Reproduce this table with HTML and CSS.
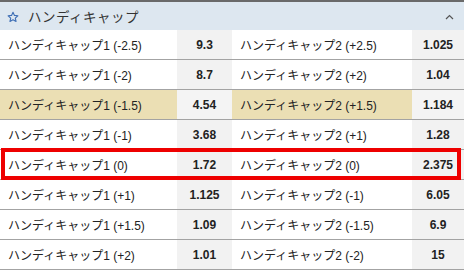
FILE: index.html
```html
<!DOCTYPE html>
<html lang="ja">
<head>
<meta charset="utf-8">
<link rel="stylesheet" href="styles.css">
</head>
<body>
<div class="market">
  <div class="head">
    <svg class="star" width="12" height="12" viewBox="0 0 24 24"><path d="M12 2.5l2.9 6.3 6.9.7-5.2 4.6 1.5 6.8L12 17.4l-6.1 3.5 1.5-6.8-5.2-4.6 6.9-.7z" fill="none" stroke="#3f6fb5" stroke-width="2.2" stroke-linejoin="round"/></svg>
    <span class="title">ハンディキャップ</span>
    <svg class="chev" width="9" height="6" viewBox="0 0 9 6"><polyline points="1,5 4.5,1.5 8,5" fill="none" stroke="#555" stroke-width="1.2"/></svg>
  </div>
  <div class="row"><div class="lbl">ハンディキャップ1 (-2.5)</div><div class="odd">9.3</div><div class="lbl">ハンディキャップ2 (+2.5)</div><div class="odd">1.025</div></div>
  <div class="row"><div class="lbl">ハンディキャップ1 (-2)</div><div class="odd">8.7</div><div class="lbl">ハンディキャップ2 (+2)</div><div class="odd">1.04</div></div>
  <div class="row hl"><div class="lbl">ハンディキャップ1 (-1.5)</div><div class="odd">4.54</div><div class="lbl">ハンディキャップ2 (+1.5)</div><div class="odd">1.184</div></div>
  <div class="row"><div class="lbl">ハンディキャップ1 (-1)</div><div class="odd">3.68</div><div class="lbl">ハンディキャップ2 (+1)</div><div class="odd">1.28</div></div>
  <div class="row sel"><div class="lbl">ハンディキャップ1 (0)</div><div class="odd">1.72</div><div class="lbl">ハンディキャップ2 (0)</div><div class="odd">2.375</div></div>
  <div class="row"><div class="lbl">ハンディキャップ1 (+1)</div><div class="odd">1.125</div><div class="lbl">ハンディキャップ2 (-1)</div><div class="odd">6.05</div></div>
  <div class="row"><div class="lbl">ハンディキャップ1 (+1.5)</div><div class="odd">1.09</div><div class="lbl">ハンディキャップ2 (-1.5)</div><div class="odd">6.9</div></div>
  <div class="row"><div class="lbl">ハンディキャップ1 (+2)</div><div class="odd">1.01</div><div class="lbl">ハンディキャップ2 (-2)</div><div class="odd">15</div></div>
</div>
</body>
</html>
```
FILE: styles.css
```css
html, body {
  margin: 0;
  padding: 0;
  background: #fff;
}
.market {
  width: 464px;
  font-family: "Liberation Sans", "Noto Sans CJK JP", sans-serif;
  color: #222;
}
.head {
  box-sizing: border-box;
  height: 30px;
  border-top: 2px solid #6a6a6a;
  background: #dde7f0;
  display: flex;
  align-items: center;
  padding: 0 10px 0 7px;
}
.star {
  flex: none;
  margin-right: 9px;
  margin-top: 1px;
}
.title {
  font-size: 13.5px;
  letter-spacing: 0.5px;
  color: #333;
  flex: 1;
}
.chev {
  flex: none;
  margin-top: 2px;
}
.row {
  box-sizing: border-box;
  height: 30px;
  border-bottom: 1px solid #a3a3a3;
  display: grid;
  grid-template-columns: 177px 55px 180px 52px;
}
.lbl {
  display: flex;
  align-items: center;
  padding-left: 8px;
  font-size: 12px;
  background: #fff;
  white-space: nowrap;
}
.odd {
  display: flex;
  align-items: center;
  justify-content: center;
  background: #f2f2f2;
  font-weight: bold;
  font-size: 12px;
}
.hl .lbl {
  background: #ebdfb4;
}
.hl .odd {
  background: #f4f4f4;
}
.sel {
  position: relative;
}
.sel::after {
  content: "";
  position: absolute;
  left: 1px;
  right: 3px;
  top: -2px;
  bottom: -1px;
  border: 4px solid #ee0000;
  pointer-events: none;
}
```
